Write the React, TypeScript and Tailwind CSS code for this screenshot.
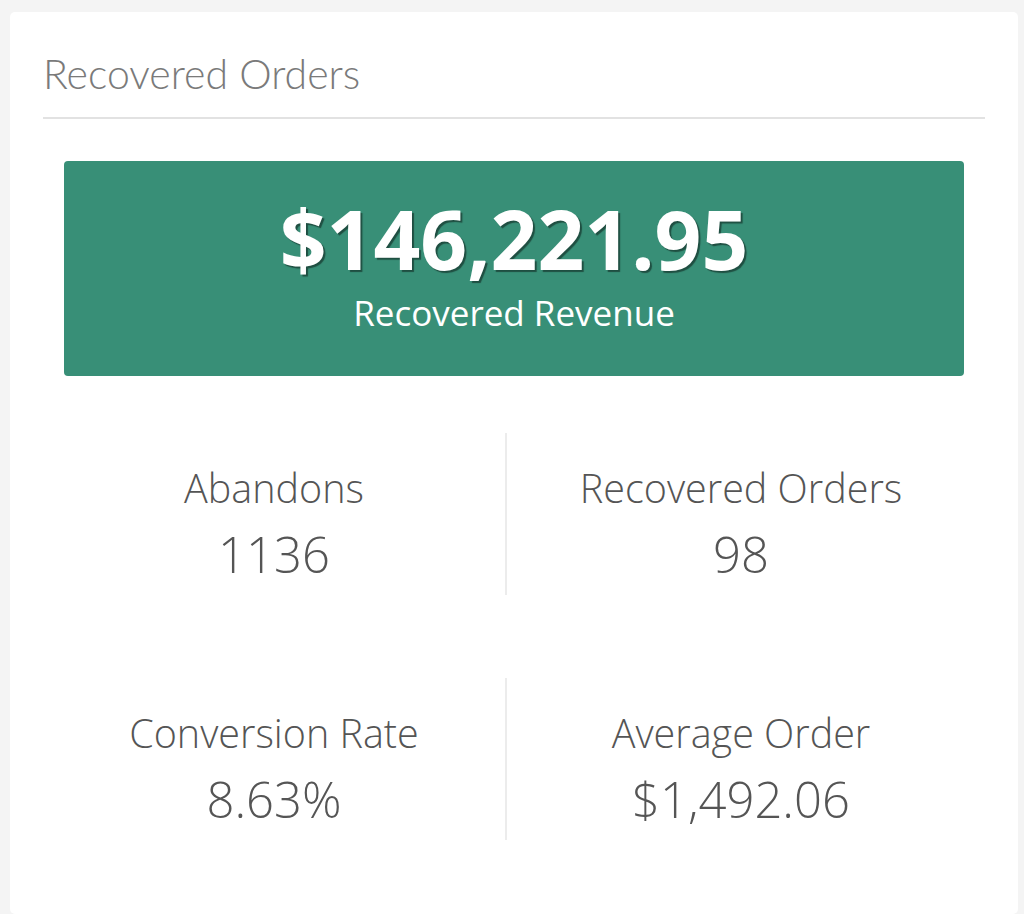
import React from 'react';

interface Stat {
  label: string;
  value: string;
}

const stats: Stat[][] = [
  [
    { label: 'Abandons', value: '1136' },
    { label: 'Recovered Orders', value: '98' },
  ],
  [
    { label: 'Conversion Rate', value: '8.63%' },
    { label: 'Average Order', value: '$1,492.06' },
  ],
];

function StatCell({ stat, divided }: { stat: Stat; divided?: boolean }) {
  return (
    <div
      className={
        'flex h-[162px] flex-col items-center justify-center pt-[18px] text-[#555] ' +
        (divided ? 'border-l-2 border-[#ececec]' : '')
      }
    >
      <span className="text-[39.5px] font-light leading-[46px]">{stat.label}</span>
      <span className="mt-[16px] text-[49px] font-light leading-[54px]">{stat.value}</span>
    </div>
  );
}

export default function App() {
  return (
    <div className="min-h-[914px] bg-[#f4f4f4] pl-[10px] pr-[6px] pt-[12px] font-['Open_Sans',sans-serif]">
      <div className="h-[902px] rounded-[5px] bg-white px-[33px] pt-[38px]">
        <h2 className="font-['Lato',sans-serif] text-[41px] font-light leading-[48px] text-[#7a7a7a]">
          Recovered Orders
        </h2>
        <div className="mt-[19px] h-[2px] bg-[#e2e2e2]" />

        <div className="mx-[21px] mt-[42px] flex h-[215px] flex-col items-center rounded-[4px] bg-[#388f77] pt-[37px] text-white">
          <span className="text-[82px] font-bold leading-[80px] [text-shadow:2px_2px_1px_rgba(0,0,0,0.45)]">
            $146,221.95
          </span>
          <span className="mt-[15px] text-[35px] leading-[40px]">Recovered Revenue</span>
        </div>

        <div className="mt-[57px] flex flex-col gap-[83px]">
          {stats.map((row, i) => (
            <div key={i} className="grid grid-cols-[462px_470px]">
              <StatCell stat={row[0]} />
              <StatCell stat={row[1]} divided />
            </div>
          ))}
        </div>
      </div>
    </div>
  );
}
